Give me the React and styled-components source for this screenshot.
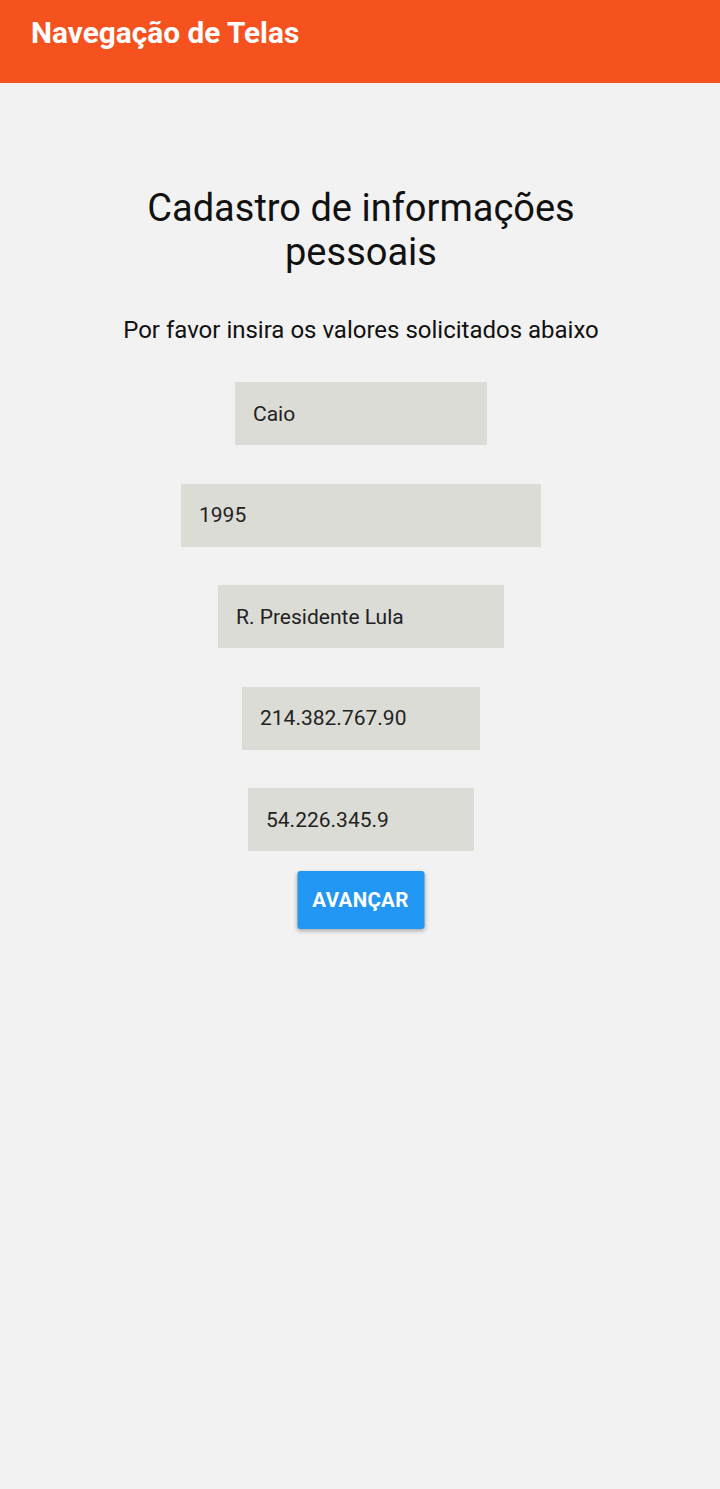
import React from "react";
import styled, { createGlobalStyle } from "styled-components";

const GlobalStyle = createGlobalStyle`
  html, body { margin: 0; padding: 0; background: #f2f2f2; }
  body { font-family: Roboto, "Noto Sans", sans-serif; }
`;

const Page = styled.div`
  min-height: 1489px;
  background: #f2f2f2;
  display: flex;
  flex-direction: column;
`;

const Header = styled.header`
  height: 83px;
  background: #f5521f;
  display: flex;
  align-items: center;
  padding: 0 0 17px 31px;
  box-sizing: border-box;
`;

const HeaderTitle = styled.h1`
  margin: 0;
  color: #ffffff;
  font-size: 29.8px;
  font-weight: 700;
  line-height: 34px;
`;

const Content = styled.main`
  display: flex;
  flex-direction: column;
  align-items: center;
  padding-top: 103px;
`;

const Title = styled.h2`
  margin: 0;
  width: 480px;
  text-align: center;
  font-size: 38px;
  font-weight: 400;
  line-height: 44px;
  color: #111;
  transform: translateX(1px);
`;

const Subtitle = styled.p`
  margin: 42px 0 0;
  font-size: 24px;
  line-height: 28px;
  color: #111;
  transform: translateX(1px);
`;

const Fields = styled.div`
  margin-top: 38px;
  display: flex;
  flex-direction: column;
  align-items: center;
  gap: 38.5px;
`;

const Field = styled.div`
  width: ${(p) => p.$w}px;
  height: 63px;
  box-sizing: border-box;
  background: #dcdcd6;
  padding-left: 18px;
  display: flex;
  align-items: center;
  font-size: 21px;
  color: #222;
  transform: translateX(1px);
`;

const Button = styled.button`
  margin-top: 20px;
  width: 127px;
  height: 58px;
  border: none;
  border-radius: 3px;
  background: #2196f3;
  color: #fff;
  font-family: Roboto, sans-serif;
  font-size: 20.5px;
  font-weight: 700;
  letter-spacing: 0.3px;
  box-shadow: 0 2px 4px rgba(0, 0, 0, 0.3);
  transform: translateX(0.5px);
`;

const fields = [
  { v: "Caio", w: 252 },
  { v: "1995", w: 360 },
  { v: "R. Presidente Lula", w: 286 },
  { v: "214.382.767.90", w: 238 },
  { v: "54.226.345.9", w: 226 },
];

export default function App() {
  return (
    <Page>
      <GlobalStyle />
      <Header>
        <HeaderTitle>Navegação de Telas</HeaderTitle>
      </Header>
      <Content>
        <Title>Cadastro de informações pessoais</Title>
        <Subtitle>Por favor insira os valores solicitados abaixo</Subtitle>
        <Fields>
          {fields.map((f) => (
            <Field key={f.v} $w={f.w}>{f.v}</Field>
          ))}
        </Fields>
        <Button>AVANÇAR</Button>
      </Content>
    </Page>
  );
}
